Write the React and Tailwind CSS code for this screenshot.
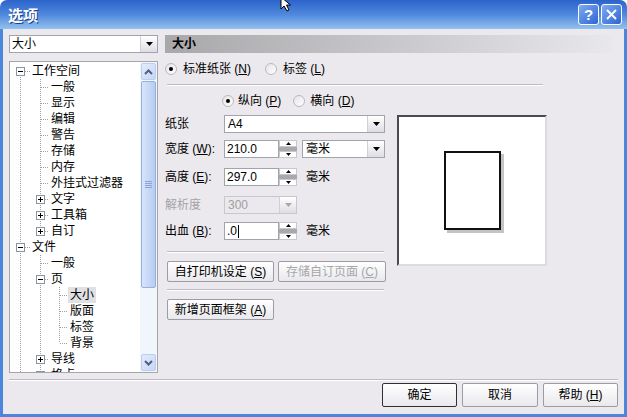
import React from 'react';

const FONT = "font-['Liberation_Sans','Noto_Sans_CJK_SC',sans-serif]";

function U({ children }) {
  return <span className="underline underline-offset-[1px]">{children}</span>;
}

function Tri({ color = '#000', up = false }) {
  return (
    <svg width="7" height="4" viewBox="0 0 7 4" className="block">
      {up ? <polygon points="0,4 7,4 3.5,0" fill={color} /> : <polygon points="0,0 7,0 3.5,4" fill={color} />}
    </svg>
  );
}

function SmallTri({ up }) {
  return (
    <svg width="5" height="3" viewBox="0 0 5 3" className="block">
      {up ? <polygon points="0,3 5,3 2.5,0" fill="#000" /> : <polygon points="0,0 5,0 2.5,3" fill="#000" />}
    </svg>
  );
}

function DropBtn({ disabled }) {
  return (
    <div className="w-[17px] h-full flex items-center justify-center bg-gradient-to-b from-white to-[#dedde2] border-l border-[#d0d0d4]">
      <Tri color={disabled ? '#a8a8a8' : '#000'} />
    </div>
  );
}

function Combo({ w, text, disabled, bold }) {
  return (
    <div
      className={`${w} h-[18px] flex border ${disabled ? 'border-[#c8c8cc] bg-[#ebe9ed] text-[#a0a0a0]' : 'border-[#a0a4ac] bg-white'} shrink-0`}
    >
      <div className="flex-1 flex items-center pl-[3px] whitespace-nowrap">{text}</div>
      <DropBtn disabled={disabled} />
    </div>
  );
}

function Radio({ checked }) {
  return (
    <span className="w-[12px] h-[12px] rounded-full border border-[#b9b9bd] bg-gradient-to-br from-[#e4e4e6] to-white flex items-center justify-center shrink-0">
      {checked && <span className="w-[4px] h-[4px] rounded-full bg-black" />}
    </span>
  );
}

function Spinner() {
  return (
    <div className="w-[18px] h-[18px] flex flex-col shrink-0">
      <div className="h-[7px] border border-[#c8c8cc] bg-white flex items-center justify-center">
        <SmallTri up />
      </div>
      <div className="h-[4px] bg-[#a9a9ad]" />
      <div className="h-[7px] border border-[#c8c8cc] bg-white flex items-center justify-center">
        <SmallTri />
      </div>
    </div>
  );
}

function Input({ children }) {
  return (
    <div className="w-[55px] h-[18px] border border-[#a0a4ac] bg-white flex items-center pl-[2px] shrink-0">
      {children}
    </div>
  );
}

function Sep({ w }) {
  return (
    <div className={`${w} flex flex-col shrink-0`}>
      <div className="h-px bg-[#bdbbc2]" />
      <div className="h-px bg-white" />
    </div>
  );
}

function Btn({ w, h = 'h-[21px]', children, disabled, def }) {
  return (
    <div
      className={`${w} ${h} shrink-0 flex items-center justify-center rounded-[2px] border ${def ? 'border-[#303030]' : 'border-[#9c9ca2]'} bg-gradient-to-b from-white to-[#e9e8ec] ${disabled ? 'text-[#a6a6aa]' : 'text-black'} whitespace-nowrap`}
    >
      {children}
    </div>
  );
}

const DOT = { stroke: '#a0a0a4', strokeDasharray: '1 1', shapeRendering: 'crispEdges' };

function Cell({ w, up, down, h, box }) {
  const cx = 10;
  return (
    <svg width={w} height={16} className="block shrink-0">
      {up && <line x1={cx + 0.5} y1={0} x2={cx + 0.5} y2={8} {...DOT} />}
      {down && <line x1={cx + 0.5} y1={8} x2={cx + 0.5} y2={16} {...DOT} />}
      {h && <line x1={cx + 1} y1={8.5} x2={w} y2={8.5} {...DOT} />}
      {box && (
        <g shapeRendering="crispEdges">
          <rect x={cx - 3.5} y={4.5} width={8} height={8} fill="white" stroke="#8a94a0" />
          <line x1={cx - 2} y1={8.5} x2={cx + 3} y2={8.5} stroke="#000" />
          {box === '+' && <line x1={cx + 0.5} y1={6} x2={cx + 0.5} y2={11} stroke="#000" />}
        </g>
      )}
    </svg>
  );
}

const A = { up: 1, down: 1 };
const L = { up: 1, down: 1, h: 1 };

const rows = [
  { t: '工作空间', c: [{ down: 1, h: 1, box: '-' }] },
  { t: '一般', c: [A, L] },
  { t: '显示', c: [A, L] },
  { t: '编辑', c: [A, L] },
  { t: '警告', c: [A, L] },
  { t: '存储', c: [A, L] },
  { t: '内存', c: [A, L] },
  { t: '外挂式过滤器', c: [A, L] },
  { t: '文字', c: [A, { ...L, box: '+' }] },
  { t: '工具箱', c: [A, { ...L, box: '+' }] },
  { t: '自订', c: [A, { up: 1, h: 1, box: '+' }] },
  { t: '文件', c: [{ ...L, box: '-' }] },
  { t: '一般', c: [A, L] },
  { t: '页', c: [A, { ...L, box: '-' }] },
  { t: '大小', c: [A, A, L], sel: true },
  { t: '版面', c: [A, A, L] },
  { t: '标签', c: [A, A, L] },
  { t: '背景', c: [A, A, { up: 1, h: 1 }] },
  { t: '导线', c: [A, { ...L, box: '+' }] },
  { t: '格点', c: [A, { ...L, box: '+' }] },
];

function Chevron({ up }) {
  return (
    <svg width="9" height="6" viewBox="0 0 9 6" className="block">
      {up ? (
        <polyline points="1,5 4.5,1.5 8,5" fill="none" stroke="#4d6185" strokeWidth="2" />
      ) : (
        <polyline points="1,1 4.5,4.5 8,1" fill="none" stroke="#4d6185" strokeWidth="2" />
      )}
    </svg>
  );
}

function Scrollbar() {
  return (
    <div className="w-[17px] h-full flex flex-col bg-[#f1f5fc] shrink-0">
      <div className="h-[17px] mx-[1px] mt-[1px] rounded-[2px] border border-[#bccdee] bg-gradient-to-br from-[#e4ecfb] to-[#c5d6f5] flex items-center justify-center">
        <Chevron up />
      </div>
      <div className="h-[207px] mt-[1px] mx-[1px] rounded-[2px] border border-[#98b0e0] bg-gradient-to-r from-[#d8e4fa] via-[#c8d8f6] to-[#b7cbf2] flex items-center justify-center">
        <div className="flex flex-col gap-[1px]">
          <div className="w-[7px] h-px bg-[#8aa3d4]" />
          <div className="w-[7px] h-px bg-[#8aa3d4]" />
          <div className="w-[7px] h-px bg-[#8aa3d4]" />
          <div className="w-[7px] h-px bg-[#8aa3d4]" />
        </div>
      </div>
      <div className="flex-1" />
      <div className="h-[17px] mx-[1px] mb-[1px] rounded-[2px] border border-[#bccdee] bg-gradient-to-br from-[#e4ecfb] to-[#c5d6f5] flex items-center justify-center">
        <Chevron />
      </div>
    </div>
  );
}

function Tree() {
  return (
    <div className="mt-[8px] h-[312px] border border-[#a5a5ab] bg-white flex overflow-hidden">
      <div className="flex-1 pt-[1px] overflow-hidden">
        {rows.map((r, i) => (
          <div key={i} className="h-[16px] flex items-center">
            {r.c.map((c, j) => (
              <Cell key={j} w={j === 0 ? 20 : 19} {...c} />
            ))}
            <span
              className={`h-[16px] px-[2px] flex items-center whitespace-nowrap ${r.sel ? 'bg-[#e1e0e4]' : ''}`}
            >
              {r.t}
            </span>
          </div>
        ))}
      </div>
      <Scrollbar />
    </div>
  );
}

function TitleBar() {
  return (
    <div className="h-[29px] rounded-t-[7px] bg-gradient-to-b from-[#2c63cb] via-[#4f88dc] to-[#93c1ee] flex items-center pl-[8px] pr-[5px]">
      <span className="text-white font-bold text-[15px] leading-none font-['Noto_Sans_CJK_SC',sans-serif] [text-shadow:1px_1px_0_#1c3f8e]">
        选项
      </span>
      <div className="flex-1" />
      <div className="flex gap-[2px]">
        <div className="w-[21px] h-[21px] rounded-[3px] border border-white bg-gradient-to-br from-[#7eaaf0] to-[#2f64d4] flex items-center justify-center text-white font-bold text-[15px] font-['Liberation_Sans',sans-serif] leading-none">
          ?
        </div>
        <div className="w-[21px] h-[21px] rounded-[3px] border border-white bg-gradient-to-br from-[#7eaaf0] to-[#2f64d4] flex items-center justify-center">
          <svg width="11" height="11" viewBox="0 0 11 11" className="block">
            <line x1="1" y1="1" x2="10" y2="10" stroke="white" strokeWidth="2" />
            <line x1="10" y1="1" x2="1" y2="10" stroke="white" strokeWidth="2" />
          </svg>
        </div>
      </div>
    </div>
  );
}

function Label({ children, gray }) {
  return <div className={`w-[59px] shrink-0 whitespace-nowrap ${gray ? 'text-[#a3a3a7]' : ''}`}>{children}</div>;
}

export default function App() {
  return (
    <div className={`${FONT} relative w-[627px] h-[417px] text-[12px] leading-none text-black overflow-hidden bg-white`}>
      <TitleBar />
      <div className="h-[388px] bg-[#ebe9ed] border-x-[3px] border-b-[3px] border-[#4a86dc] flex flex-col pt-[6px] pl-[6px]">
        <div className="flex h-[338px]">
          {/* left column */}
          <div className="w-[149px] flex flex-col shrink-0">
            <div className="h-[18px] flex border border-[#a0a4ac] bg-white">
              <div className="flex-1 flex items-center pl-[2px]">大小</div>
              <DropBtn />
            </div>
            <Tree />
          </div>

          {/* right column */}
          <div className="ml-[7px] w-[447px] flex flex-col">
            <div className="h-[18px] bg-gradient-to-r from-[#a8a8ab] to-[#e8e7eb] flex items-center pl-[7px] font-bold">
              大小
            </div>
            <div className="mt-[8px] h-[16px] flex items-center">
              <Radio checked />
              <span className="ml-[6px]">
                标准纸张 (<U>N</U>)
              </span>
              <span className="ml-[14px]">
                <Radio />
              </span>
              <span className="ml-[6px]">
                标签 (<U>L</U>)
              </span>
            </div>
            <div className="mt-[7px] ml-[2px]">
              <Sep w="w-[376px]" />
            </div>

            <div className="flex">
              {/* form column */}
              <div className="w-[221px] flex flex-col shrink-0">
                <div className="mt-[7px] h-[16px] flex items-center pl-[57px]">
                  <Radio checked />
                  <span className="ml-[4px]">
                    纵向 (<U>P</U>)
                  </span>
                  <span className="ml-[12px]">
                    <Radio />
                  </span>
                  <span className="ml-[5px]">
                    横向 (<U>D</U>)
                  </span>
                </div>

                <div className="mt-[6px] flex items-center">
                  <Label>纸张</Label>
                  <Combo w="w-[161px]" text="A4" />
                </div>

                <div className="mt-[7px] flex items-center">
                  <Label>
                    宽度 (<U>W</U>):
                  </Label>
                  <Input>210.0</Input>
                  <Spinner />
                  <div className="ml-[5px]">
                    <Combo w="w-[83px]" text="毫米" />
                  </div>
                </div>

                <div className="mt-[10px] flex items-center">
                  <Label>
                    高度 (<U>E</U>):
                  </Label>
                  <Input>297.0</Input>
                  <Spinner />
                  <span className="ml-[9px]">毫米</span>
                </div>

                <div className="mt-[10px] flex items-center">
                  <Label gray>解析度</Label>
                  <Combo w="w-[73px]" text="300" disabled />
                </div>

                <div className="mt-[8px] flex items-center">
                  <Label>
                    出血 (<U>B</U>):
                  </Label>
                  <Input>
                    .0<span className="ml-[1px] w-px h-[13px] bg-black inline-block" />
                  </Input>
                  <Spinner />
                  <span className="ml-[9px]">毫米</span>
                </div>

                <div className="mt-[11px] ml-[2px]">
                  <Sep w="w-[217px]" />
                </div>

                <div className="mt-[8px] ml-[2px] flex gap-[4px]">
                  <Btn w="w-[107px]">
                    自打印机设定 (<U>S</U>)
                  </Btn>
                  <Btn w="w-[108px]" disabled>
                    存储自订页面 (<U>C</U>)
                  </Btn>
                </div>

                <div className="mt-[7px] ml-[2px]">
                  <Sep w="w-[217px]" />
                </div>

                <div className="mt-[8px] ml-[2px]">
                  <Btn w="w-[107px]">
                    新增页面框架 (<U>A</U>)
                  </Btn>
                </div>
              </div>

              {/* preview */}
              <div className="ml-[11px] mt-[29px] w-[150px] h-[151px] bg-white border-t-2 border-l-2 border-t-[#4a4a4e] border-l-[#4a4a4e] border-r-2 border-b-2 border-r-[#dcdce0] border-b-[#dcdce0] flex items-center justify-center shrink-0">
                <div className="w-[57px] h-[79px] border-2 border-[#111] bg-white shadow-[3px_3px_0_#c4c4c6]" />
              </div>
            </div>
          </div>
        </div>

        <div className="mt-[6px]">
          <Sep w="w-[609px]" />
        </div>
        <div className="mt-[2px] flex justify-end pr-[6px] gap-[5px]">
          <Btn w="w-[75px]" h="h-[24px]" def>
            确定
          </Btn>
          <Btn w="w-[76px]" h="h-[24px]">
            取消
          </Btn>
          <Btn w="w-[75px]" h="h-[24px]">
            帮助 (<U>H</U>)
          </Btn>
        </div>
      </div>

      <svg width="14" height="16" viewBox="0 0 14 16" className="absolute left-[280px] top-[-4px]">
        <path d="M1 1 L1 13 L4 10 L7 15 L9 14 L6.5 9 L10.5 9 Z" fill="white" stroke="black" strokeWidth="1" />
      </svg>
    </div>
  );
}
